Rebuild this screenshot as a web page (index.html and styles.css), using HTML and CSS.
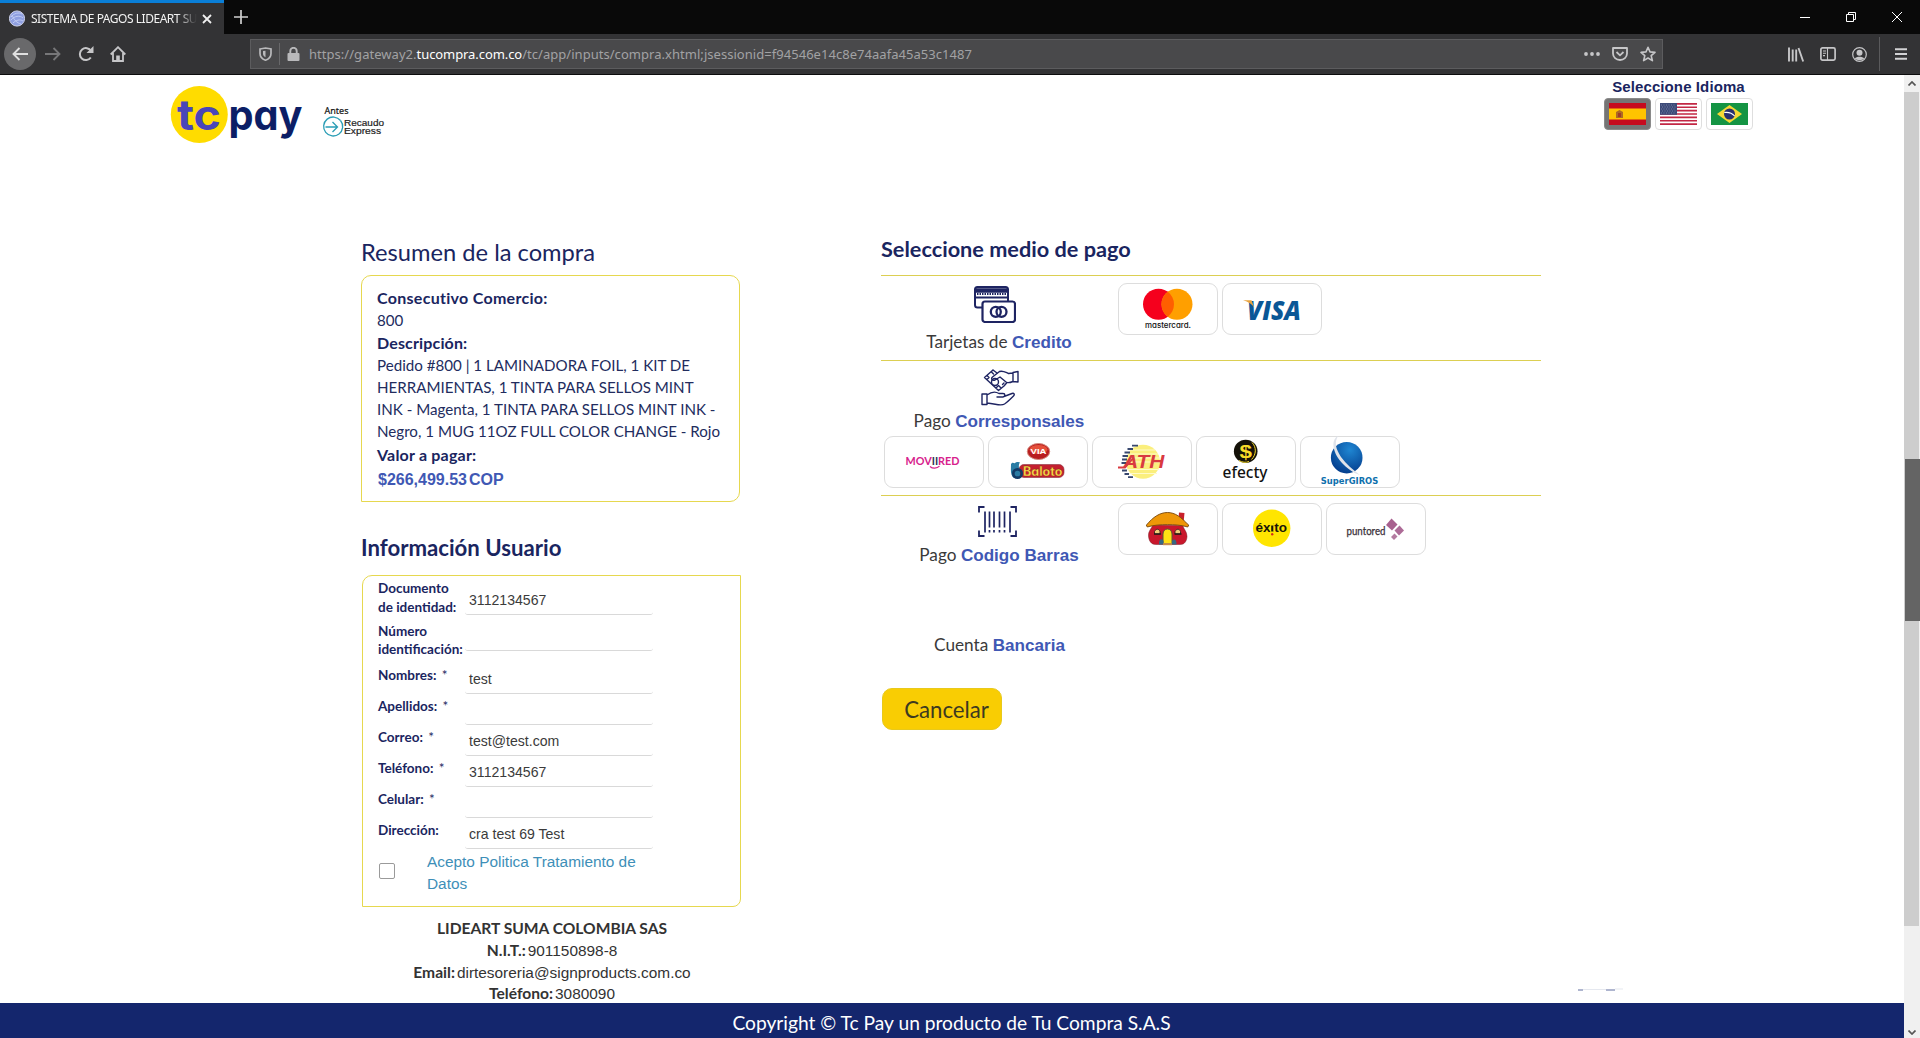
FILE: index.html
```html
<!DOCTYPE html>
<html lang="es">
<head>
<meta charset="utf-8">
<title>SISTEMA DE PAGOS LIDEART SUMA</title>
<link rel="stylesheet" href="styles.css">
</head>
<body>
<div class="tabbar">
  <div class="tab">
    <svg class="favicon" width="16" height="17" viewBox="0 0 16 17"><circle cx="8" cy="8.5" r="7.6" fill="#8f9fe0" stroke="#d9def5" stroke-width=".9"/><path d="M2 7c3-4 8-5 11-3M2 10c3-4 9-5 12-2M4 13c3-3 7-4 10-2M3 5c2 5 5 8 9 9" fill="none" stroke="#c5cff5" stroke-width=".9"/></svg>
    <span class="tab-title">SISTEMA DE PAGOS LIDEART SU</span>
    <svg width="10" height="10" viewBox="0 0 10 10"><path d="M1 1l8 8M9 1L1 9" stroke="#f0f0f0" stroke-width="1.8"/></svg>
  </div>
  <svg class="newtab" width="14" height="14" viewBox="0 0 14 14"><path d="M7 0v14M0 7h14" stroke="#d0d0d0" stroke-width="1.7"/></svg>
  <div class="window-buttons">
    <svg width="10" height="10" viewBox="0 0 10 10"><path d="M0 5.500h10" stroke="#fff"/></svg>
    <svg width="10" height="10" viewBox="0 0 10 10"><path d="M.5 2.500h7v7h-7zM2.500 2.500v-2h7v7h-2" fill="none" stroke="#fff"/></svg>
    <svg width="10" height="10" viewBox="0 0 10 10"><path d="M0 0l10 10M10 0L0 10" stroke="#fff"/></svg>
  </div>
</div>
<div class="toolbar">
  <div class="nav">
    <span class="back"><svg width="16" height="14" viewBox="0 0 16 14"><path d="M16 7H1.500M7.500 1l-6 6 6 6" fill="none" stroke="#e0e0e0" stroke-width="1.900"/></svg></span>
    <svg width="16" height="14" viewBox="0 0 16 14"><path d="M0 7h14.500M8.500 1l6 6-6 6" fill="none" stroke="#777779" stroke-width="1.800"/></svg>
    <svg width="16" height="16" viewBox="0 0 16 16"><path d="M12.800 11.500A6 6 0 1 1 13 5" fill="none" stroke="#c6c6c8" stroke-width="2"/><path d="M15.500 0v7h-7z" fill="#c6c6c8"/></svg>
    <svg width="16" height="16" viewBox="0 0 16 16"><path d="M.7 8.500L8 1.200l7.300 7.300M3 7v8h10V7" fill="none" stroke="#c6c6c8" stroke-width="1.800"/><path d="M6.200 15V9.500h3.600V15" fill="#c6c6c8"/></svg>
  </div>
  <div class="urlbar">
    <svg width="13" height="14" viewBox="0 0 13 14"><path d="M1 2l5.500-1L12 2v4.500c0 3.500-2.500 5.700-5.500 6.700C3.500 12.200 1 10 1 6.500z" fill="none" stroke="#b9b9bb" stroke-width="1.700"/><path d="M6.500 3.700v6.500c-1.700-.9-2.500-2-2.500-3.700V4.100z" fill="#b9b9bb"/></svg>
    <span class="split"></span>
    <svg width="13" height="14" viewBox="0 0 13 14"><rect x=".5" y="6" width="12" height="8" rx="1" fill="#b9b9bb"/><path d="M3.300 6.500V4a3.200 3.200 0 0 1 6.400 0v2.500" fill="none" stroke="#b9b9bb" stroke-width="1.900"/></svg>
    <span class="url">https://gateway2.<b>tucompra.com.co</b>/tc/app/inputs/compra.xhtml;jsessionid=f94546e14c8e74aafa45a53c1487</span>
    <div class="url-actions">
      <svg width="16" height="4" viewBox="0 0 16 4"><g fill="#c6c6c8"><circle cx="2" cy="2" r="1.900"/><circle cx="8" cy="2" r="1.900"/><circle cx="14" cy="2" r="1.900"/></g></svg>
      <svg width="16" height="14" viewBox="0 0 16 14"><path d="M1 1h14v5.500a7 6.500 0 0 1-14 0z" fill="none" stroke="#c6c6c8" stroke-width="1.800" stroke-linejoin="round"/><path d="M4.500 5L8 8.300 11.500 5" fill="none" stroke="#c6c6c8" stroke-width="1.800"/></svg>
      <svg width="16" height="16" viewBox="0 0 16 16"><path d="M8 1.300l2 4.600 5 .5-3.800 3.300 1.200 4.900L8 12l-4.400 2.600 1.200-4.900L1 6.400l5-.5z" fill="none" stroke="#c6c6c8" stroke-width="1.600" stroke-linejoin="round"/></svg>
    </div>
  </div>
  <div class="tools">
    <svg width="16" height="15" viewBox="0 0 16 15"><path d="M1 .5v14M4.700 2.500v12M8.200 2.500v12M10.500 1l4.700 13.500" stroke="#c6c6c8" stroke-width="1.900"/></svg>
    <svg width="16" height="14" viewBox="0 0 16 14"><rect x=".9" y=".9" width="14.200" height="12.200" rx="1.600" fill="none" stroke="#c6c6c8" stroke-width="1.700"/><path d="M7.500 1v12M3 4h3M3 6.300h3M3 8.600h2" stroke="#c6c6c8" stroke-width="1.100"/></svg>
    <svg width="15" height="15" viewBox="0 0 15 15"><circle cx="7.500" cy="7.500" r="6.800" fill="none" stroke="#c6c6c8" stroke-width="1.200"/><circle cx="7.500" cy="5.800" r="3" fill="#c6c6c8"/><path d="M2.800 11.600c1.500-2.600 7.900-2.600 9.400 0-2 2.300-7.400 2.300-9.400 0z" fill="#c6c6c8"/></svg>
    <span class="tools-split"></span>
    <svg width="12" height="12" viewBox="0 0 12 12"><path d="M0 1.200h12M0 6h12M0 10.800h12" stroke="#d2d2d4" stroke-width="1.900"/></svg>
  </div>
</div>

<div class="viewport">
  <div class="page">
    <header class="header">
      <svg class="logo" width="220" height="60" viewBox="171 85 220 60">
        <circle cx="199.300" cy="114.500" r="28.500" fill="#ffdc00"/>
        <text x="177" y="129.500" class="logo-text" font-size="42" textLength="44" lengthAdjust="spacingAndGlyphs" fill="#4a46b8">tc</text>
        <text x="228.500" y="129.500" class="logo-text" font-size="41" textLength="74" lengthAdjust="spacingAndGlyphs" fill="#0c1e66">pay</text>
        <text x="324.500" y="113.500" class="logo-small" font-size="9.500" textLength="24" lengthAdjust="spacingAndGlyphs" fill="#111">Antes</text>
        <path d="M340.500 120.500A9.500 9.500 0 1 0 339 134M325.500 127h11.500M332.500 122l5 5-5 5" fill="none" stroke="#2a9db5" stroke-width="1.300"/>
        <path d="M340.500 120.500A9.500 9.500 0 0 1 339 134" fill="none" stroke="#2a9db5" stroke-width="1.300"/>
        <text x="344" y="125.500" class="logo-sans" font-size="9.800" textLength="40" lengthAdjust="spacingAndGlyphs" fill="#222">Recaudo</text>
        <text x="344" y="134.200" class="logo-sans" font-size="9.800" textLength="37" lengthAdjust="spacingAndGlyphs" fill="#222">Express</text>
      </svg>
      <div class="language">
        <div class="language-title">Seleccione Idioma</div>
        <div class="flags">
          <span class="flag active"><svg width="37" height="22" viewBox="0 0 37 22"><path fill="#c60b1e" d="M0 0h37v22H0z"/><path fill="#ffc400" d="M0 5.500h37v11H0z"/><path d="M7 15V9l3.500-2L14 9v6z" fill="#ad6a24"/><path d="M9 10h3v4H9z" fill="#a03a28"/></svg></span>
          <span class="flag"><svg width="37" height="22" viewBox="0 0 37 22"><path fill="#fff" d="M0 0h37v22H0z"/><path d="M0 .85h37M0 4.230h37M0 7.610h37M0 11h37M0 14.380h37M0 17.770h37M0 21.150h37" stroke="#c22744" stroke-width="1.690"/><path fill="#3c4a78" d="M0 0h17v11.800H0z"/><path d="M1 2h15M2 4h14M1 6h15M2 8h14M1 10h15" stroke="#8d97b5" stroke-width=".7" stroke-dasharray="1 1.500"/></svg></span>
          <span class="flag"><svg width="37" height="22" viewBox="0 0 37 22"><path fill="#149443" d="M0 0h37v22H0z"/><path fill="#f5d935" d="M18.500 2L31 11l-12.500 9L6 11z"/><circle cx="18.500" cy="11" r="5.500" fill="#28306e"/><path d="M13.300 9.500c4-.6 8 .9 10.300 3.500" fill="none" stroke="#fff" stroke-width="1.100"/></svg></span>
        </div>
      </div>
    </header>

    <main class="columns">
      <section class="left">
        <h2 class="summary-title">Resumen de la compra</h2>
        <div class="summary">
          <div class="key">Consecutivo Comercio:</div>
          <div class="line">800</div>
          <div class="key key-desc">Descripción:</div>
          <div class="line">Pedido #800 | 1 LAMINADORA FOIL, 1 KIT DE<br>HERRAMIENTAS, 1 TINTA PARA SELLOS MINT<br>INK - Magenta, 1 TINTA PARA SELLOS MINT INK -<br>Negro, 1 MUG 11OZ FULL COLOR CHANGE - Rojo</div>
          <div class="key key-total">Valor a pagar:</div>
          <div class="total"><span>$266,499.53</span><span>COP</span></div>
        </div>

        <h2 class="user-title">Información Usuario</h2>
        <form class="user">
          <div class="field document"><label>Documento<br>de identidad:</label><div class="value">3112134567</div></div>
          <div class="field number"><label>Número<br>identificación:</label><div class="value"></div></div>
          <div class="field names"><label>Nombres: <i>*</i></label><div class="value">test</div></div>
          <div class="field"><label>Apellidos: <i>*</i></label><div class="value"></div></div>
          <div class="field"><label>Correo: <i>*</i></label><div class="value">test@test.com</div></div>
          <div class="field"><label>Teléfono: <i>*</i></label><div class="value">3112134567</div></div>
          <div class="field"><label>Celular: <i>*</i></label><div class="value"></div></div>
          <div class="field"><label>Dirección:</label><div class="value">cra test 69 Test</div></div>
          <div class="terms"><span class="checkbox"></span><a>Acepto Politica Tratamiento de<br>Datos</a></div>
        </form>

        <div class="merchant">
          <div><b>LIDEART SUMA COLOMBIA SAS</b></div>
          <div><b>N.I.T.:</b><span>901150898-8</span></div>
          <div><b>Email:</b><span>dirtesoreria@signproducts.com.co</span></div>
          <div class="merchant-phone"><b>Teléfono:</b><span>3080090</span></div>
        </div>
      </section>

      <section class="right">
        <h2 class="methods-title">Seleccione medio de pago</h2>
        <div class="method cards-row">
          <div class="method-name">
            <svg class="icon-cards" width="42" height="37" viewBox="0 0 42 37" fill="none" stroke="#1e2462" stroke-width="2"><rect x="1" y="1" width="33" height="20.500" rx="2.500"/><path d="M1 4.500h33" stroke-width="4.500"/><path d="M3 8h29" stroke-dasharray="1.500 1" stroke-width="1.800"/><path d="M1 11.500h33"/><rect x="8.500" y="15.500" width="32.500" height="20.500" rx="2.500" fill="#fff" stroke-width="2.200"/><circle cx="21.800" cy="25.800" r="5" stroke-width="2.300"/><circle cx="27.500" cy="25.800" r="5" stroke-width="2.300"/></svg>
            <div class="method-label">Tarjetas de <b>Credito</b></div>
          </div>
          <div class="brands">
            <div class="brand"><svg viewBox="1 1 98 50"><circle cx="40.500" cy="21.300" r="15.500" fill="#f5001d"/><circle cx="59" cy="21.300" r="15.500" fill="#ff9f00"/><path d="M49.750 8.870a15.500 15.500 0 0 1 0 24.860a15.500 15.500 0 0 1 0-24.860z" fill="#ff5f00"/><text class="t-mastercard" x="27" y="44.700" font-size="8.200" textLength="46" lengthAdjust="spacingAndGlyphs" fill="#111">mastercard.</text></svg></div>
            <div class="brand"><svg viewBox="1 1 98 50"><text class="t-visa" x="25" y="36.500" font-size="27" textLength="54" lengthAdjust="spacingAndGlyphs" fill="#0a5796">VISA</text><path d="M21 17.200h8.500l2.800 7.800c-2-4-6-6.500-11.300-7.800z" fill="#e8a33d"/></svg></div>
          </div>
        </div>
        <div class="method agents-row">
          <div class="method-name">
            <svg class="icon-hands" width="38" height="37" viewBox="0 0 38 37" fill="none" stroke="#1e2462" stroke-width="1.400" stroke-linejoin="round" stroke-linecap="round"><path d="M32 3.500l5-1v10.500l-5-.5zM32 4l-4.500.5C24 3 22 1.500 18.500 2.500l-7 5.500c-2 2 0 4 2.500 3l5-3 6 5c2 1.500 4.500.5 7-.5"/><path d="M12 1L3.500 8.500 17.500 21.500l5.500-4.500 3-3.500M12 1l4 3M6 10.500l2-2-2-2M10.500 3l2 2M15 19l2.500-2.500 2.500 2.500M23 14l-1.500 1.500"/><circle cx="14" cy="13" r="3.500"/><path d="M1 25h5v10.500H1zM6 26c4-3 8-4 12-1.500h4c2.500 0 2.500 3 0 3.500h-6M23 27.500l8-3c2-.7 3 1 1.500 2.500-3 3-6 6-9 8-4 2.500-9-.5-17.500-1"/></svg>
            <div class="method-label">Pago <b>Corresponsales</b></div>
          </div>
          <div class="brands">
            <div class="brand"><svg viewBox="1 1 98 50"><text class="t-moviired" x="21.500" y="29" font-size="11.500" textLength="54" lengthAdjust="spacingAndGlyphs" fill="#d7218c">MOV<tspan fill="#2b3556">II</tspan>RED</text><path d="M46 30.500c2.500 2.300 7 2.300 9.500-.3" fill="none" stroke="#d7218c" stroke-width="1.200"/></svg></div>
            <div class="brand"><svg viewBox="1 1 98 50"><ellipse cx="50.500" cy="15.500" rx="11.200" ry="8" fill="#b81d1f" stroke="#d58a7d"/><ellipse cx="50.500" cy="13.500" rx="9" ry="4.500" fill="#e5503b"/><text class="t-bold" x="42.500" y="18" font-size="7.500" textLength="16" lengthAdjust="spacingAndGlyphs" fill="#fff">VIA</text><rect x="31" y="28.500" width="45" height="13" rx="5" fill="#c4202f" stroke="#8b3342" stroke-width=".6"/><path d="M23 28c2-3 3 0 4-1 2-2 4 0 5-1-2 4-1 6 0 9v7h-6c-4-3-3-8-3-14z" fill="#2a7ca4"/><circle cx="29.500" cy="37.500" r="4.200" fill="none" stroke="#123a66" stroke-width="2.700"/><text class="t-baloto" x="35" y="39.500" font-size="12.500" textLength="39.500" lengthAdjust="spacingAndGlyphs" fill="#ffe24a" stroke="#7c1d17" stroke-width=".3">Baloto</text></svg></div>
            <div class="brand"><svg viewBox="1 1 98 50"><circle cx="51" cy="25.700" r="17" fill="#fbef7d"/><path d="M39 14h24M36 18h30M34 22h34M34 26h34M35 33.500h32M37 37.500h28" stroke="#fffac8" stroke-width="1"/><path d="M46 9.700h-6M41 13h-5.500M38 16.500h-5.500M36 20h-5.500M35 23.500h-5M34.500 27h-5M35 34.500h-5M37 38h-4.500M41 41.200h-5" stroke="#38486f" stroke-width="1.800"/><text class="t-ath" x="31" y="31.500" font-size="18" textLength="41.500" lengthAdjust="spacingAndGlyphs" fill="#d93a40">ATH</text><path d="M26 31.500h7l8-9" fill="none" stroke="#d93a40" stroke-width="1.800"/></svg></div>
            <div class="brand"><svg viewBox="1 1 98 50"><ellipse cx="49.700" cy="15.300" rx="11.800" ry="11.600" fill="#141108"/><text class="t-bold" x="43.500" y="21.700" font-size="19" textLength="12.500" lengthAdjust="spacingAndGlyphs" fill="#f8dc28">$</text><path d="M56 6.500c4.500 4.500 4.500 12-.5 17M43 24.500c3 2 7 2.300 10 1" fill="none" stroke="#f8dc28" stroke-width="1"/><text class="t-efecty" x="26.500" y="42.300" font-size="17" textLength="45" lengthAdjust="spacingAndGlyphs" fill="#111">efecty</text></svg></div>
            <div class="brand"><svg viewBox="1 1 98 50"><defs><radialGradient id="globe" cx=".6" cy=".25" r=".8"><stop offset="0" stop-color="#1f86d2"/><stop offset="1" stop-color="#023a8a"/></radialGradient></defs><circle cx="46.700" cy="21.700" r="15.800" fill="url(#globe)"/><path d="M38 0c-8 4-5 18 5 28 7 7 13 10 17 11-7-5-14-11-19-18-5-8-7-14-3-21z" fill="#dfe3ea"/><text class="t-super" x="20.800" y="47.700" font-size="8.200" textLength="57.500" lengthAdjust="spacingAndGlyphs" fill="#0f70ad">SuperGIROS</text></svg></div>
          </div>
        </div>
        <div class="method barcode-row">
          <div class="method-name">
            <svg class="icon-barcode" width="39" height="31" viewBox="0 0 39 31" fill="none" stroke="#1e2462"><path d="M1 6.500V1h5.500M32.500 1H38v5.500M38 24.500V30h-5.500M6.500 30H1v-5.500" stroke-width="1.800"/><path d="M7 5.500v21M11.500 5.500v16M16 5.500v16M21.500 5.500v16M26.500 5.500v16M32 5.500v21" stroke-width="1.700"/><path d="M11.500 24v2.500M16 24v2.500M21.500 24v2.500M26.500 24v2.500" stroke-width="1.700"/></svg>
            <div class="method-label">Pago <b>Codigo Barras</b></div>
          </div>
          <div class="brands">
            <div class="brand"><svg viewBox="1 1 98 50"><path d="M61 9.500l5.500.5-1 10-5-3z" fill="#c9202b"/><path d="M34.500 22c0 3-4.500 5.500-4 11 .3 5 3 8.500 7 8.500h25c4 0 6.300-3.500 6.500-8 .2-5-4-8-4-11z" fill="#c9172c" stroke="#78202a" stroke-width=".5"/><path d="M28.500 22C35 14 42 9.500 49.500 9.500S63 14 70.500 22c.5 1.500-1 2.500-2.500 1.500-9-2.500-28-2.500-37 0-1.500 1-3 0-2.500-1.500z" fill="#ee9708" stroke="#76460d" stroke-width=".9"/><path d="M45 41V31c0-3 2-5 4.500-5s4.500 2 4.500 5v10z" fill="#ffe014" stroke="#5c5a35" stroke-width="1"/><path d="M36.500 31v-2.500c1.500-3 4.500-3 5.500 0V31zM57 31v-2.500c1.500-3 4.500-3 5.500 0V31z" fill="#f2cd7a" stroke="#3c201c" stroke-width=".9"/><path d="M36 31h7M56.500 31h7" stroke="#271c19" stroke-width="1.500"/><path d="M41 40c0-4 3-5 4.500-2v3.500H41zM54 41.500V38c2-3 5-1 4.500 3.500z" fill="#386884"/><path d="M45 41.200h9" stroke="#c98b4b" stroke-width="2"/></svg></div>
            <div class="brand"><svg viewBox="1 1 98 50"><circle cx="49.700" cy="25.300" r="18.700" fill="#ffe500"/><text class="t-bold" x="33.500" y="29.300" font-size="12.500" textLength="31.500" lengthAdjust="spacingAndGlyphs" fill="#181509">éxito</text><path d="M50.200 20v9.500" stroke="#ffe500" stroke-width="3"/><path d="M50.200 22.500v6" stroke="#181509" stroke-width="2"/><circle cx="50.200" cy="31.300" r="1.200" fill="#d22a1e"/></svg></div>
            <div class="brand"><svg viewBox="1 1 98 50"><text class="t-punto" x="20.500" y="32" font-size="10.500" textLength="39" lengthAdjust="spacingAndGlyphs" fill="#3a3038">puntored</text><path d="M65.500 15.500l6 6-5.500 6-6-5.500z" fill="#a8608f"/><path d="M73.500 22.500l4.500 5-5 5-4.500-5z" fill="#ad6b97"/><path d="M68.500 30.500l3 3-3.500 3.500-3-3z" fill="#b37ba0"/></svg></div>
          </div>
        </div>
        <div class="bank-row"><div class="method-label">Cuenta <b>Bancaria</b></div></div>
        <button class="cancel">Cancelar</button>
      </section>
    </main>
  </div>
  <footer class="footer">Copyright © Tc Pay un producto de Tu Compra S.A.S</footer>
  <div class="scrollbar">
    <div class="scroll-end"><svg width="8" height="5" viewBox="0 0 8 5"><path d="M.5 4.500L4 1l3.500 3.500" fill="none" stroke="#555" stroke-width="1.700"/></svg></div>
    <div class="scroll-track"><div class="scroll-thumb"></div></div>
    <div class="scroll-end bottom"><svg width="8" height="5" viewBox="0 0 8 5"><path d="M.5 .5L4 4 7.500 .5" fill="none" stroke="#555" stroke-width="1.700"/></svg></div>
  </div>
  <svg class="chat-edge" width="48" height="3" viewBox="0 0 48 3"><path d="M1 2h5M29 2h9" stroke="#5f6d9f" stroke-width="1"/><path d="M6 1.500h23M38 1h8" stroke="#d4d8e4" stroke-width=".6"/></svg>
</div>
</body>
</html>
```
FILE: styles.css
```css
* { box-sizing: border-box; }
body { margin: 0; height: 1038px; overflow: hidden; display: flex; flex-direction: column; background: #fff; font-family: Lato, sans-serif; color: #333; }
svg { display: block; flex: none; }
h2 { margin: 0; color: #1a2560; white-space: nowrap; }

/* Browser chrome */
.tabbar { height: 34px; background: #090909; display: flex; align-items: center; flex: none; font-family: "Noto Sans", sans-serif; }
.tab { width: 224px; height: 34px; background: #333335; border-top: 3px solid #0a7fd8; display: flex; align-items: center; padding: 0 12px 0 9px; }
.tab-title { flex: none; width: 168px; margin: 0 3px 0 6px; overflow: hidden; white-space: nowrap; color: #f2f2f2; font-size: 12px; letter-spacing: -.47px; -webkit-mask-image: linear-gradient(90deg, #000 146px, transparent 166px); mask-image: linear-gradient(90deg, #000 146px, transparent 166px); }
.newtab { margin-left: 10px; }
.window-buttons { margin-left: auto; display: flex; gap: 36px; padding-right: 18px; }
.toolbar { height: 41px; background: #333335; border-bottom: 1px solid #0c0c0d; display: flex; align-items: center; flex: none; }
.nav { width: 250px; display: flex; align-items: center; gap: 16.500px; padding-left: 4px; }
.back { width: 32px; height: 32px; border-radius: 50%; background: #69696b; display: flex; align-items: center; justify-content: center; margin-right: -7.500px; }
.urlbar { width: 1413px; height: 30px; background: #49494b; border: 1px solid #5c5c5e; display: flex; align-items: center; padding: 0 6px 0 8px; }
.split { width: 1px; height: 22px; background: #68686a; margin: 0 7px; }
.url { margin-left: 9px; color: #a2a2a4; font: 13px/20px "Noto Sans", sans-serif; letter-spacing: .04px; white-space: nowrap; }
.url b { font-weight: 400; color: #fff; letter-spacing: -.08px; }
.url-actions { margin-left: auto; display: flex; align-items: center; gap: 12px; }
.tools { margin-left: auto; display: flex; align-items: center; gap: 16px; padding-right: 13px; }
.tools-split { width: 1px; height: 34px; background: #5a5a5c; margin-left: -4px; margin-right: -1px; }

/* Page */
.viewport { position: relative; flex: 1; display: grid; grid-template: 928px 35px / 1904px 16px; overflow: hidden; }
.page { overflow: hidden; }
.header { height: 158px; display: flex; justify-content: space-between; padding: 0 151px 0 171px; }
.logo { margin-top: 10px; overflow: visible; }
.logo-text { font-family: Inter, sans-serif; font-weight: 700; font-feature-settings: "cv11"; }
.logo-small { font-family: "Noto Sans", sans-serif; stroke: #111; stroke-width: .2px; }
.logo-sans { font-family: "Liberation Sans", sans-serif; stroke: #222; stroke-width: .2px; }
.language { width: 149px; }
.language-title { font: 700 15px/18px "Liberation Sans", sans-serif; letter-spacing: .1px; color: #1a2560; text-align: center; margin: 3px 0 2px; }
.flags { display: flex; gap: 4.500px; }
.flag { width: 46.500px; height: 32px; border: 1px solid #dedede; border-radius: 4px; display: flex; align-items: center; justify-content: center; }
.flag.active { background: #757575; border-color: #8a8a8a; }

.columns { display: grid; grid-template-columns: 379px 660px; column-gap: 141px; padding-left: 361px; }
.left { padding-top: 3px; }
.summary-title { font-size: 23.700px; font-weight: 400; line-height: 33px; }
.summary { height: 227px; margin-top: 6px; border: 1px solid #e6d84f; border-radius: 10px 10px 10px 0; padding: 11px 0 0 15px; color: #222c5e; }
.key { font-size: 16px; line-height: 22px; font-weight: 700; letter-spacing: .29px; color: #1a2560; }
.key-desc { margin-top: 1px; letter-spacing: .15px; }
.key-total { margin-top: 2px; letter-spacing: .2px; }
.line { font-size: 15.140px; line-height: 22px; white-space: nowrap; }
.total { margin-top: 3px; font: 700 16px/22px "Liberation Sans", sans-serif; color: #4058b4; display: flex; gap: 2px; padding-left: 1px; }
.user-title { font-size: 22.200px; font-weight: 700; line-height: 30px; margin-top: 31px; }
.user { height: 332px; width: 379px; margin: 12px 0 0 1px; border: 1px solid #e6d84f; border-radius: 10px 0 8px 0; padding-left: 15px; }
.field { display: grid; grid-template: 100% / 87px 188px; height: 31px; }
.field label { font-size: 13.500px; line-height: 18px; font-weight: 700; color: #1a2560; padding-top: 3px; white-space: nowrap; }
.field i { font-style: normal; font-weight: 400; padding-left: 2px; }
.field .value { border-bottom: 1px solid #d9d9d9; border-radius: 3px; padding: 0 0 4px 4px; display: flex; align-items: flex-end; font: 14.100px/20px "Liberation Sans", sans-serif; color: #3b3b3b; }
.field.document { height: 39px; }
.field.document label { padding-top: 3px; line-height: 19px; }
.field.number { height: 36px; }
.field.number label { padding-top: 7px; }
.field.names { height: 43px; }
.field.names label { padding-top: 15px; }
.terms { display: flex; margin-top: 2px; font: 15.400px/22px "Liberation Sans", sans-serif; color: #3e8fb8; }
.checkbox { width: 16px; height: 16px; border: 1px solid #9a9a9a; border-radius: 2px; margin: 12px 32px 0 1px; }
.merchant { margin-top: 10px; width: 382px; text-align: center; font-size: 15.600px; line-height: 22px; color: #333; }
.merchant div { height: 22px; }
.merchant span { font-family: "Liberation Sans", sans-serif; font-size: 15.400px; margin-left: 2px; }
.merchant .merchant-phone { line-height: 21px; height: 21px; }

.methods-title { font-size: 21.700px; font-weight: 700; line-height: 32px; }
.method { display: flex; border-top: 1px solid #dccf52; }
.cards-row { height: 85px; margin-top: 10px; }
.agents-row { height: 135px; display: block; }
.barcode-row { height: 138px; }
.method-name { width: 236px; flex: none; display: flex; flex-direction: column; align-items: center; margin-right: 1px; }
.method-label { font-size: 17.200px; line-height: 24px; white-space: nowrap; color: #3a3a3a; }
.method-label b { font-family: "Liberation Sans", sans-serif; font-size: 17.100px; color: #4058b4; }
.icon-cards { margin: 10px 8px 7px 0; }
.icon-hands { margin: 8px 0 3px 2px; }
.icon-barcode { margin: 10px 3px 6px 0; }
.brands { display: flex; gap: 4px; padding-top: 7px; }
.agents-row .brands { padding: 2px 0 0 3px; }
.brand { width: 100px; height: 52px; border: 1px solid #ddd; border-radius: 9px; }
.brand svg { width: 98px; height: 50px; overflow: visible; }
.t-mastercard { font-family: Inter, sans-serif; font-weight: 500; font-feature-settings: "cv11"; }
.t-visa { font-family: "Open Sans", sans-serif; font-style: italic; font-weight: 800; }
.t-ath { font-family: "Liberation Sans", sans-serif; font-style: italic; font-weight: 700; }
.t-bold { font-family: "Liberation Sans", sans-serif; font-weight: 700; }
.t-moviired { font-family: Lato, sans-serif; font-weight: 700; }
.t-baloto { font-family: Inter, sans-serif; font-weight: 700; font-feature-settings: "cv11"; }
.t-efecty { font-family: "Noto Sans", sans-serif; font-weight: 500; }
.t-super { font-family: "DejaVu Sans", sans-serif; font-weight: 700; }
.t-punto { font-family: Lato, sans-serif; stroke: #3a3038; stroke-width: .25px; }
.bank-row { width: 237px; text-align: center; }
.cancel { display: block; width: 120px; height: 42px; margin: 30px 0 0 1px; border: 1px solid #e8c91c; border-radius: 10px; background: #f9cd03; color: #3d3a20; font: 22.200px/38px Lato, sans-serif; padding: 1px 0 0 9px; }

.footer { background: #14266d; color: #fff; font-size: 19.200px; line-height: 40px; text-align: center; grid-row: 2; grid-column: 1; padding-right: 1px; }
.scrollbar { grid-column: 2; grid-row: 1 / 3; background: #f0f0f0; display: flex; flex-direction: column; }
.scroll-end { height: 17px; display: flex; align-items: center; justify-content: center; }
.scroll-end.bottom { margin-top: auto; height: 12px; }
.scroll-track { height: 834px; width: 15px; background: #cdcdcd; padding: 367px 0 0 1px; }
.scroll-thumb { width: 15px; height: 162px; background: #646464; }
.chat-edge { position: absolute; left: 1577px; top: 913px; }
```
